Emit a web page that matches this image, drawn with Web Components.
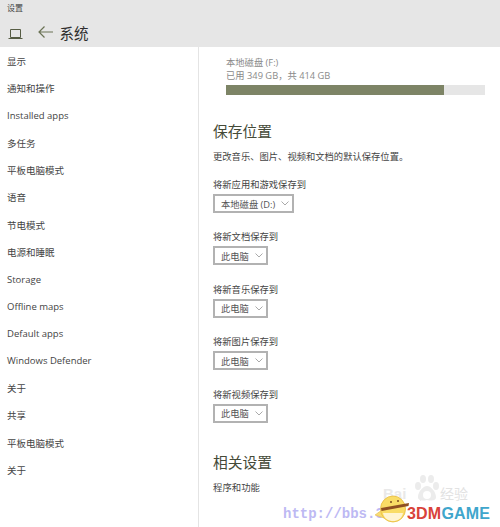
<!DOCTYPE html>
<html lang="zh">
<head>
<meta charset="utf-8">
<title>设置</title>
<style>
  html, body {
    margin: 0;
    height: 100%;
    overflow: hidden;
    font-family: "Open Sans", "Noto Sans CJK SC", sans-serif;
    color: #333;
    background: #fff;
  }
</style>
</head>
<body>
<settings-app>
  <title-bar slot="top" label="系统" caption="设置"></title-bar>
  <nav-list slot="nav">
    <nav-item>显示</nav-item>
    <nav-item>通知和操作</nav-item>
    <nav-item>Installed apps</nav-item>
    <nav-item>多任务</nav-item>
    <nav-item>平板电脑模式</nav-item>
    <nav-item>语音</nav-item>
    <nav-item>节电模式</nav-item>
    <nav-item>电源和睡眠</nav-item>
    <nav-item>Storage</nav-item>
    <nav-item>Offline maps</nav-item>
    <nav-item>Default apps</nav-item>
    <nav-item>Windows Defender</nav-item>
    <nav-item>关于</nav-item>
    <nav-item>共享</nav-item>
    <nav-item>平板电脑模式</nav-item>
    <nav-item>关于</nav-item>
  </nav-list>
  <disk-usage slot="main" name="本地磁盘 (F:)" used="已用 349 GB，共 414 GB" percent="84"></disk-usage>
  <section-head slot="main">保存位置</section-head>
  <p-text slot="main" class="desc">更改音乐、图片、视频和文档的默认保存位置。</p-text>
  <save-select slot="main" class="first" label="将新应用和游戏保存到" value="本地磁盘 (D:)"></save-select>
  <save-select slot="main" label="将新文档保存到" value="此电脑"></save-select>
  <save-select slot="main" label="将新音乐保存到" value="此电脑"></save-select>
  <save-select slot="main" label="将新图片保存到" value="此电脑"></save-select>
  <save-select slot="main" label="将新视频保存到" value="此电脑"></save-select>
  <section-head slot="main" class="related">相关设置</section-head>
  <p-text slot="main">程序和功能</p-text>
  <water-mark slot="over"></water-mark>
</settings-app>

<script>
/**
 * Small helper, every element below is the same shape: a template and a shadow root.
 *
 * @param {string} name - The tag name.
 * @param {Function} render - Returns the shadow markup for an element.
 */
function define (name, render) {
  customElements.define(name, class extends HTMLElement {
    constructor () {
      super()
      this.attachShadow({ mode: 'open' }).innerHTML = render(this)
    }
  })
}

define('settings-app', () => `
<style>
  :host { display: flex; flex-direction: column; width: 500px; height: 527px; position: relative; overflow: hidden; }
  .body { flex: 1; display: flex; min-height: 0; }
  .nav { width: 198px; border-right: 1px solid #e4e4e4; }
  .main { flex: 1; padding: 10px 15px 0 14px; display: flex; flex-direction: column; min-width: 0; }
</style>
<slot name="top"></slot>
<div class="body">
  <div class="nav"><slot name="nav"></slot></div>
  <div class="main"><slot name="main"></slot></div>
</div>
<slot name="over"></slot>
`)

define('title-bar', (el) => `
<style>
  :host { display: block; height: 47px; background: #e6e6e6; flex: none; }
  .cap { font-size: 8px; line-height: 10px; padding: 3px 0 0 7px; color: #444; height: 12px; }
  .row { display: flex; align-items: center; height: 24px; margin-top: 7px; padding-left: 8px; }
  .back { margin-left: 15px; margin-top: -5px; }
  h1 { margin: 0 0 0 6.500px; font-size: 14.500px; font-weight: 400; color: #2e2e2e; line-height: 20px; }
  svg { display: block; flex: none; }
</style>
<div class="cap">${el.getAttribute('caption')}</div>
<div class="row">
  <svg width="15" height="12" viewBox="0 0 15 12" fill="none" stroke="#565c44" stroke-width="1">
    <path d="M2.500 1.500h10v8h-10zM.5 10.500h14"/>
  </svg>
  <svg class="back" width="15" height="12" viewBox="0 0 15 12" fill="none" stroke="#6b7355" stroke-width="1.2">
    <path d="M15 6H1M6.500.5 1 6l5.500 5.500"/>
  </svg>
  <h1>${el.getAttribute('label')}</h1>
</div>
`)

define('nav-list', () => `
<style>
  :host { display: flex; flex-direction: column; padding-top: .5px; }
</style>
<slot></slot>
`)

define('nav-item', () => `
<style>
  :host { display: flex; align-items: center; height: 27.250px; padding-left: 7px; font-size: 9.500px; color: #444; white-space: nowrap; }
</style>
<slot></slot>
`)

define('disk-usage', (el) => `
<style>
  :host { display: block; margin-left: 13px; font-size: 9.300px; color: #8a8a8a; }
  .name { line-height: 12px; }
  .used { line-height: 14px; }
  .bar { height: 10px; background: #e6e6e6; margin-top: 2px; }
  .fill { height: 100%; width: ${el.getAttribute('percent')}%; background: #7d8466; }
</style>
<div class="name">${el.getAttribute('name')}</div>
<div class="used">${el.getAttribute('used')}</div>
<div class="bar"><div class="fill"></div></div>
`)

define('section-head', () => `
<style>
  :host { display: block; font-size: 14.750px; line-height: 20px; color: #454a38; margin-top: 26px; }
  :host(.related) { margin-top: 29px; }
</style>
<slot></slot>
`)

define('p-text', () => `
<style>
  :host { display: block; font-size: 9.400px; line-height: 14px; color: #444; margin-top: 9px; }
  :host(.desc) { font-size: 9.300px; }
</style>
<slot></slot>
`)

define('save-select', (el) => `
<style>
  :host { display: block; margin-top: 17.400px; font-size: 9.300px; color: #444; }
  :host(.first) { margin-top: 14px; }
  .label { line-height: 14px; }
  .box { display: flex; width: max-content; align-items: center; gap: 6px; height: 15px; margin-top: 2px; padding: 0 3px 0 6px; border: 2px solid #b2b2b2; color: #555; }
  svg { display: block; }
</style>
<div class="label">${el.getAttribute('label')}</div>
<div class="box">
  <span>${el.getAttribute('value')}</span>
  <svg width="8" height="5" viewBox="0 0 8 5" fill="none" stroke="#aaa"><path d="M.5 .5 4 4 7.500 .5"/></svg>
</div>
`)

define('water-mark', () => `
<style>
  :host { position: absolute; left: 0; top: 0; width: 500px; height: 527px; pointer-events: none; }
  span, svg { position: absolute; white-space: nowrap; }
  .url { left: 283px; top: 506px; font: 700 14px/16px "Liberation Mono", monospace; color: #bdb9f3; }
  .game { left: 407px; top: 505px; font: 700 16px/18px "Liberation Sans", sans-serif; letter-spacing: .2px; }
  .three { position: static; color: #d9423a; }
  .g { position: static; color: #3fa6cc; }
  .baidu { left: 383px; top: 485px; font: 700 15px/18px "Liberation Sans", sans-serif; color: #e9e9e9; }
  .jy { left: 440px; top: 486px; font-size: 14px; line-height: 16px; color: #e2e2e2; }
  .paw { left: 415px; top: 473px; }
  .bird { left: 374px; top: 494px; }
</style>
<span class="baidu">Bai</span>
<svg class="paw" width="24" height="30" viewBox="0 0 24 30" fill="#ececec">
  <ellipse cx="8" cy="6" rx="3" ry="4"/><ellipse cx="16" cy="6" rx="3" ry="4"/>
  <ellipse cx="3" cy="13" rx="3" ry="4"/><ellipse cx="21" cy="13" rx="3" ry="4"/>
  <path d="M12 13c4 0 9 6 9 11 0 4-5 4-9 3-4 1-9 1-9-3 0-5 5-11 9-11z"/>
  <circle cx="12" cy="22" r="4" fill="#fff"/>
</svg>
<span class="jy">经验</span>
<span class="url">http://bbs.3</span>
<span class="game"><span class="three">3DM</span><span class="g">GAME</span></span>
<svg class="bird" width="36" height="29" viewBox="0 0 36 29">
  <path d="M8 16 1 21l9 3z" fill="#f8dc74" stroke="#e6c04a" stroke-width=".6"/>
  <ellipse cx="19" cy="15" rx="12.500" ry="13" fill="#f9dc66" stroke="#e8bd40" stroke-width=".8"/>
  <path d="M9 19h20c-1 6-6 8-10 8s-9-2-10-8z" fill="#fff4d2"/>
  <path d="M7 14l28-5-.5 3-27 5z" fill="#8f4f22"/>
  <circle cx="17" cy="8" r="1" fill="#7a4a20"/>
  <circle cx="24" cy="7" r="1" fill="#7a4a20"/>
</svg>
`)
</script>
</body>
</html>
